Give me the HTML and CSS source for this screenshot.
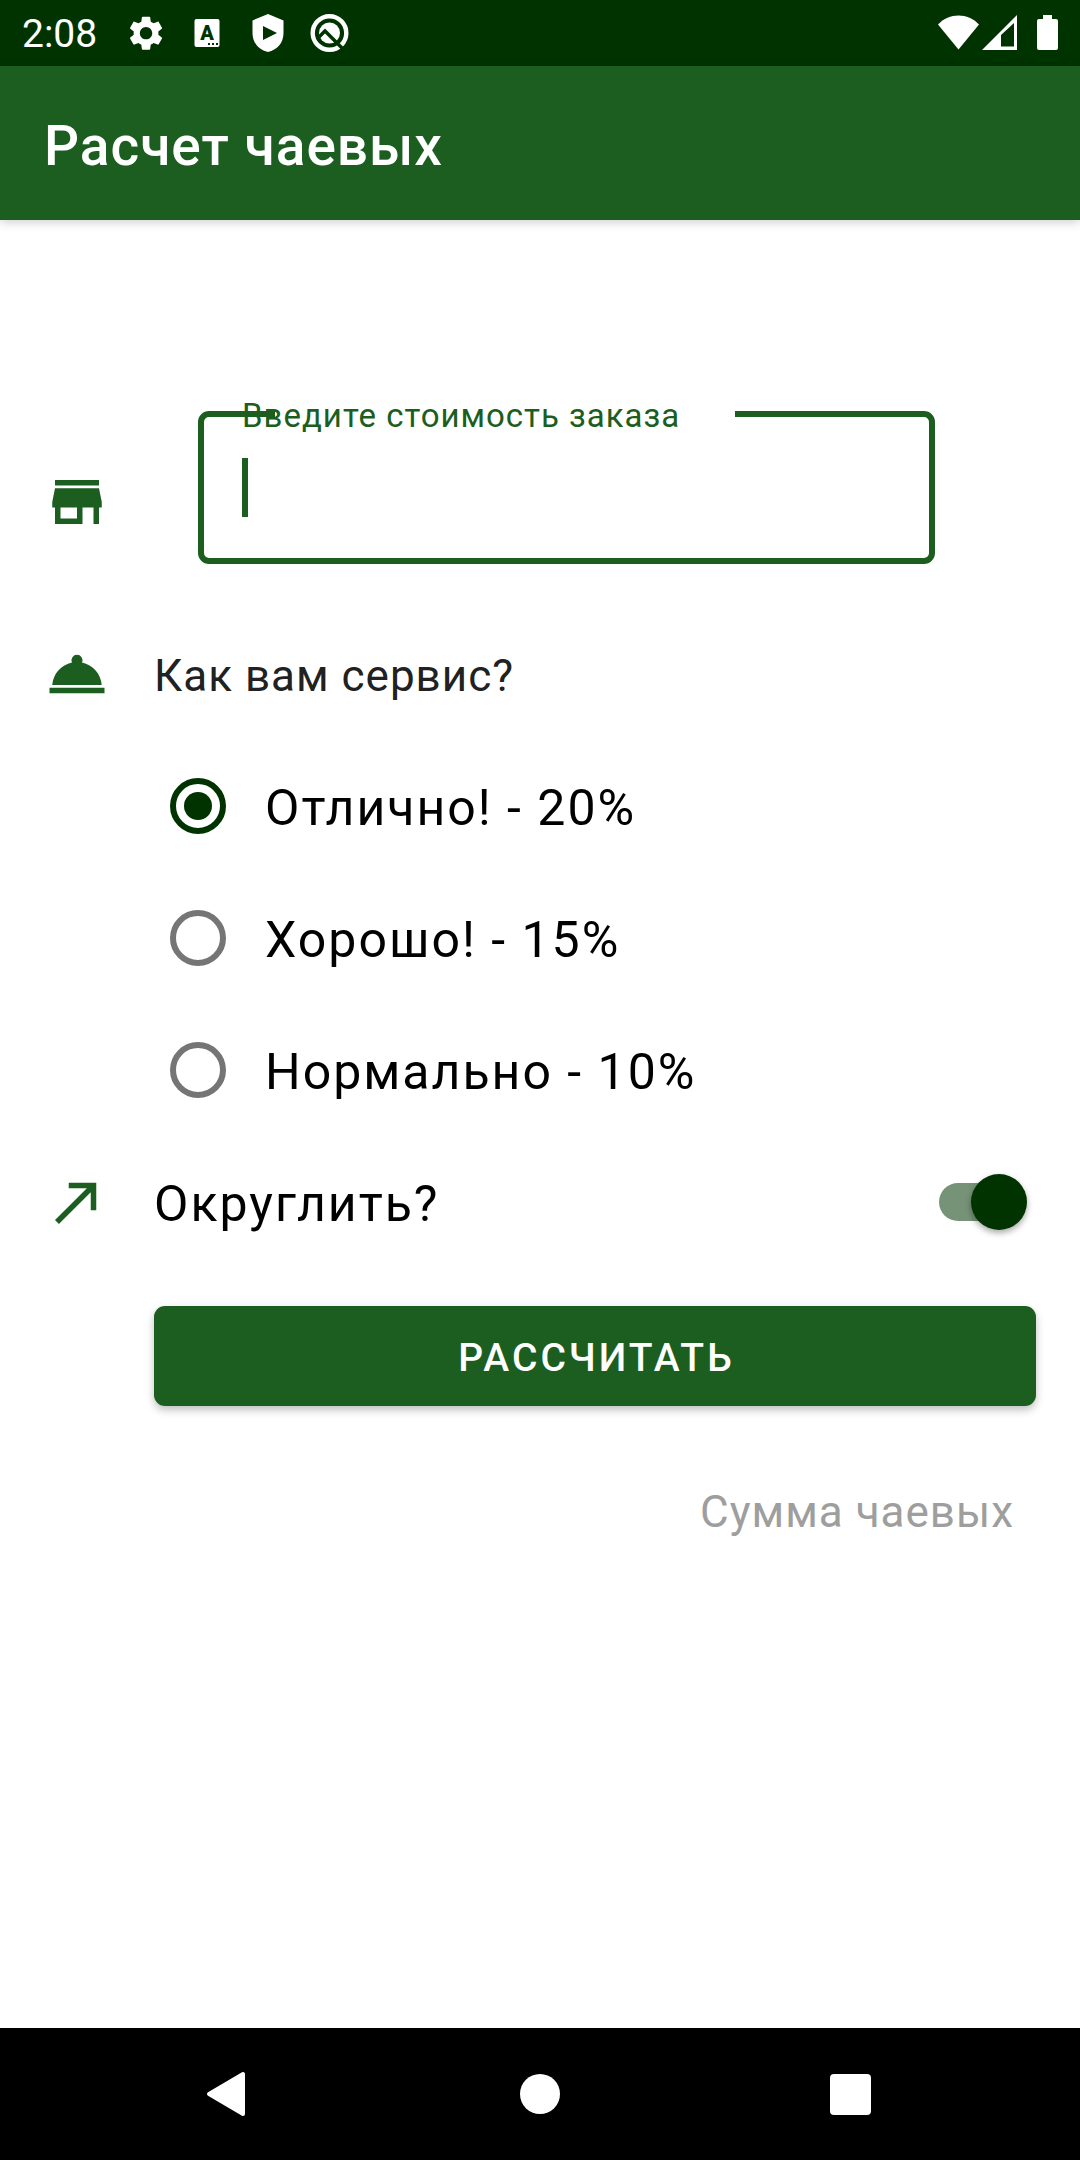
FILE: index.html
```html
<!DOCTYPE html>
<html lang="ru">
<head>
<meta charset="utf-8">
<meta name="viewport" content="width=device-width, initial-scale=1">
<title>Расчет чаевых</title>
<link rel="stylesheet" href="styles.css">
</head>
<body>
<div class="status-bar">
  <span class="clock">2:08</span>
  <div class="notifications">
    <svg class="notification" viewBox="0 0 50 50" aria-hidden="true">
      <path transform="translate(4.4 4.5) scale(1.72)" fill="#fff" d="M19.14 12.94c.04-.3.06-.61.06-.94 0-.32-.02-.64-.07-.94l2.03-1.58c.18-.14.23-.41.12-.61l-1.92-3.32c-.12-.22-.37-.29-.59-.22l-2.39.96c-.5-.38-1.03-.7-1.62-.94l-.36-2.54c-.04-.24-.24-.41-.48-.41h-3.84c-.24 0-.43.17-.47.41l-.36 2.54c-.59.24-1.13.57-1.62.94l-2.39-.96c-.22-.08-.47 0-.59.22L2.74 8.87c-.12.21-.08.47.12.61l2.03 1.58c-.05.3-.09.63-.09.94s.02.64.07.94l-2.03 1.58c-.18.14-.23.41-.12.61l1.92 3.32c.12.22.37.29.59.22l2.39-.96c.5.38 1.03.7 1.62.94l.36 2.54c.05.24.24.41.48.41h3.84c.24 0 .44-.17.47-.41l.36-2.54c.59-.24 1.13-.56 1.62-.94l2.39.96c.22.08.47 0 .59-.22l1.92-3.32c.12-.22.07-.47-.12-.61l-2.01-1.58zM12 15.6c-1.98 0-3.6-1.62-3.6-3.6s1.62-3.6 3.6-3.6 3.6 1.62 3.6 3.6-1.62 3.6-3.6 3.6z"/>
    </svg>
    <svg class="notification" viewBox="0 0 50 50" aria-hidden="true">
      <rect x="12.5" y="11" width="25" height="28" rx="2" fill="#fff"/>
      <text class="badge-letter" x="25" y="32" text-anchor="middle">A</text>
      <path fill="#003300" d="M26 35h2v2h-2zM30 35h2v2h-2zM34 35h2v2h-2z"/>
    </svg>
    <svg class="notification" viewBox="0 0 50 50" aria-hidden="true">
      <path fill="#fff" fill-rule="evenodd" d="M25 6L40.500 12.500V25C40.500 35 34 42 25 44C16 42 9.500 35 9.500 25V12.500ZM20 18V32L34 25Z"/>
    </svg>
    <svg class="notification" viewBox="0 0 50 50" aria-hidden="true">
      <circle cx="25.500" cy="25" r="16.800" fill="none" stroke="#fff" stroke-width="4.400"/>
      <circle cx="25.500" cy="25" r="10.500" fill="#fff"/>
      <path fill="none" stroke="#003300" stroke-width="3.400" d="M14.500 29.500L21 23L41 43"/>
    </svg>
  </div>
  <svg class="signals" viewBox="0 0 122 44" aria-hidden="true">
    <path fill="#fff" d="M2 13.500C13 1.500 32 1.500 43 13.500L22.500 38.500Z"/>
    <path fill="#fff" fill-rule="evenodd" d="M46 39L81 4V39ZM65 24V35.500H78V12Z"/>
    <path fill="#fff" d="M107 4h9v4h4a2 2 0 0 1 2 2v27a2 2 0 0 1-2 2h-17a2 2 0 0 1-2-2V10a2 2 0 0 1 2-2h4z"/>
  </svg>
</div>

<header class="app-bar">
  <h1 class="app-title">Расчет чаевых</h1>
</header>

<main class="content">
  <form class="tip-form">
    <div class="row cost-row">
      <svg class="icon" viewBox="0 0 24 24" aria-hidden="true"><path d="M20 4H4v2h16V4zm1 10v-2l-1-5H4l-1 5v2h1v6h10v-6h4v6h2v-6h1zm-9 4H6v-4h6v4z"/></svg>
      <div class="text-field">
        <input class="text-input" id="cost" type="text" inputmode="decimal">
        <span class="notch"></span>
        <label class="field-label" for="cost">Введите стоимость заказа</label>
        <span class="caret"></span>
      </div>
    </div>

    <div class="row">
      <svg class="icon" viewBox="0 0 24 24" aria-hidden="true"><path d="M2 17h20v2H2zm11.840-9.210A2.006 2.006 0 0 0 12 5a2.006 2.006 0 0 0-1.840 2.790C6.250 8.600 3.270 11.930 3 16h18c-.270-4.070-3.250-7.400-7.160-8.210z"/></svg>
      <span class="question" id="service">Как вам сервис?</span>
    </div>

    <div class="options" role="radiogroup" aria-labelledby="service">
      <label class="option"><input class="radio" type="radio" name="service" checked><span class="option-text">Отлично! - 20%</span></label>
      <label class="option"><input class="radio" type="radio" name="service"><span class="option-text">Хорошо! - 15%</span></label>
      <label class="option"><input class="radio" type="radio" name="service"><span class="option-text">Нормально - 10%</span></label>
    </div>

    <div class="row">
      <svg class="icon" viewBox="0 0 24 24" aria-hidden="true"><path d="M9 5v2h6.590L4 18.590 5.410 20 17 8.410V15h2V5z"/></svg>
      <label class="round-up">
        <span class="option-text">Округлить?</span>
        <input class="switch" type="checkbox" role="switch" checked>
      </label>
    </div>

    <button class="calculate" type="button">РАССЧИТАТЬ</button>
    <output class="result">Сумма чаевых</output>
  </form>
</main>

<nav class="nav-bar">
  <button class="nav-button" type="button" aria-label="Назад">
    <svg class="nav-icon" viewBox="0 0 48 48" aria-hidden="true"><path fill="#fff" stroke="#fff" stroke-width="4" stroke-linejoin="round" d="M3 24L37 4V44Z"/></svg>
  </button>
  <button class="nav-button" type="button" aria-label="Домой">
    <svg class="nav-icon" viewBox="0 0 48 48" aria-hidden="true"><circle cx="24" cy="24" r="20" fill="#fff"/></svg>
  </button>
  <button class="nav-button" type="button" aria-label="Недавние">
    <svg class="nav-icon" viewBox="0 0 48 48" aria-hidden="true"><rect x="4" y="4" width="41" height="41" rx="4" fill="#fff"/></svg>
  </button>
</nav>
</body>
</html>
```
FILE: styles.css
```css
:root {
  --green: #1b5e20;
  --dark-green: #003300;
}

* {
  box-sizing: border-box;
}

body {
  margin: 0;
  min-height: 100vh;
  display: flex;
  flex-direction: column;
  background: #fff;
  color: #000;
  font-family: Roboto, "Noto Sans", sans-serif;
}

.status-bar {
  height: 66px;
  padding: 0 22px;
  display: flex;
  align-items: center;
  background: var(--dark-green);
  color: #fff;
}

.clock {
  width: 99px;
  padding-top: 2px;
  font-size: 39px;
  line-height: 44px;
}

.notifications {
  flex: 1;
  display: flex;
  gap: 11px;
}

.notification {
  width: 50px;
  height: 50px;
}

.badge-letter {
  font-size: 20px;
  font-weight: 900;
  fill: var(--dark-green);
}

.signals {
  width: 122px;
  height: 44px;
}

.app-bar {
  height: 154px;
  padding: 0 44px;
  display: flex;
  align-items: center;
  background: var(--green);
  color: #fff;
  box-shadow: 0 2px 10px rgba(0, 0, 0, 0.2);
}

.app-title {
  margin: 0;
  padding-top: 6px;
  font-size: 55px;
  line-height: 66px;
  font-weight: 500;
  letter-spacing: 1px;
}

.content {
  flex: 1;
  padding: 191px 44px 44px;
}

.tip-form {
  display: flex;
  flex-direction: column;
}

.row {
  min-height: 132px;
  display: grid;
  grid-template-columns: 66px 1fr;
  column-gap: 44px;
  align-items: center;
}

.cost-row {
  padding-bottom: 15px;
}

.icon {
  width: 66px;
  height: 66px;
  fill: var(--green);
}

.text-field {
  position: relative;
  margin: 0 101px 29px 44px;
}

.text-input {
  display: block;
  width: 100%;
  height: 153px;
  padding: 0 38px;
  border: 6px solid var(--green);
  border-radius: 11px;
  outline: none;
  background: none;
  color: #000;
  font: 44px/52px Roboto, "Noto Sans", sans-serif;
}

/* Opening in the outline behind the floating label */
.notch {
  position: absolute;
  top: 0;
  left: 77px;
  width: 460px;
  height: 6px;
  background: #fff;
}

.field-label {
  position: absolute;
  top: -15px;
  left: 44px;
  color: var(--green);
  font-size: 33px;
  line-height: 40px;
  letter-spacing: 1px;
  white-space: nowrap;
}

.caret {
  position: absolute;
  top: 47px;
  left: 44px;
  width: 6px;
  height: 59px;
  background: var(--green);
}

.question {
  padding-top: 4px;
  color: #212121;
  font-size: 44px;
  line-height: 52px;
  letter-spacing: 1px;
}

.options {
  display: flex;
  flex-direction: column;
  padding-left: 126px;
}

.option {
  height: 132px;
  display: flex;
  align-items: center;
  gap: 39px;
}

.option-text {
  padding-top: 4px;
  font-size: 50px;
  line-height: 58px;
  letter-spacing: 2px;
}

.radio {
  appearance: none;
  flex: none;
  width: 56px;
  height: 56px;
  margin: 0;
  display: grid;
  place-items: center;
  border: 6px solid #757575;
  border-radius: 50%;
}

.radio:checked {
  border-color: var(--dark-green);
}

.radio:checked::before {
  content: "";
  width: 28px;
  height: 28px;
  border-radius: 50%;
  background: var(--dark-green);
}

.round-up {
  display: flex;
  align-items: center;
  justify-content: space-between;
}

.switch {
  appearance: none;
  width: 88px;
  height: 38px;
  margin: 0 9px 0 0;
  display: flex;
  align-items: center;
  justify-content: flex-end;
  border-radius: 19px;
  background: linear-gradient(90deg, #779377 70px, transparent 70px);
}

.switch::before {
  content: "";
  flex: none;
  width: 56px;
  height: 56px;
  border-radius: 50%;
  background: var(--dark-green);
  box-shadow: 0 3px 6px rgba(0, 0, 0, 0.35);
}

.calculate {
  height: 100px;
  margin: 38px 0 0 110px;
  padding: 4px 0 0 3px;
  border: 0;
  border-radius: 11px;
  background: var(--green);
  color: #fff;
  font: 500 39px/44px Roboto, "Noto Sans", sans-serif;
  letter-spacing: 3px;
  box-shadow: 0 4px 8px rgba(0, 0, 0, 0.25);
}

.result {
  align-self: flex-end;
  margin: 80px 22px 0 0;
  color: #9e9e9e;
  font-size: 44px;
  line-height: 52px;
  letter-spacing: 1px;
}

.nav-bar {
  height: 132px;
  padding: 0 75px;
  display: grid;
  grid-template-columns: repeat(3, 1fr);
  background: #000;
}

.nav-button {
  display: flex;
  align-items: center;
  justify-content: center;
  padding: 0;
  border: 0;
  background: none;
}

.nav-icon {
  width: 48px;
  height: 48px;
}
```
